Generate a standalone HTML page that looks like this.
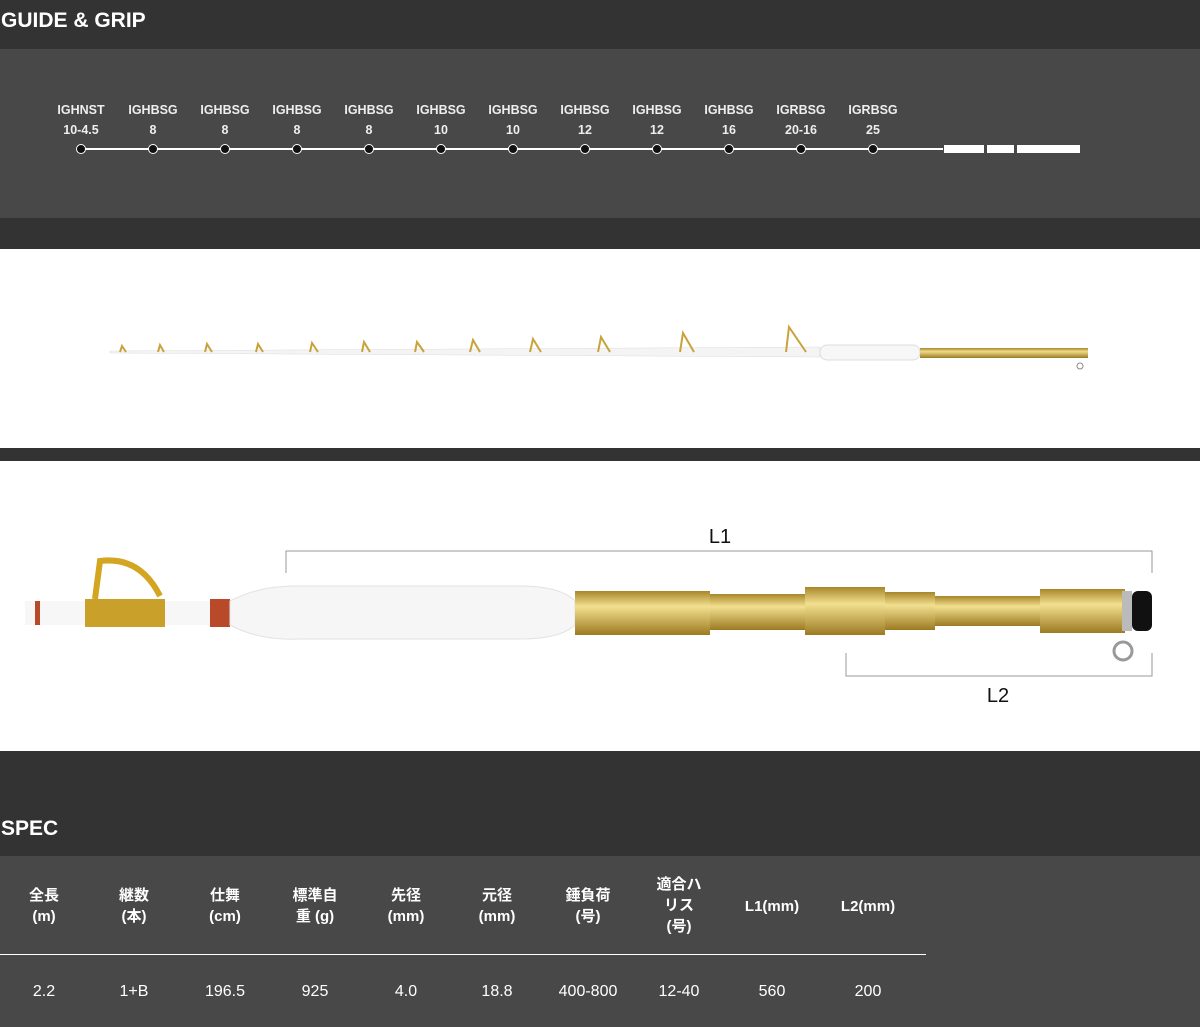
<!DOCTYPE html>
<html><head><meta charset="utf-8"><style>
body{margin:0;width:1200px;height:1027px;background:#333;font-family:"Liberation Sans","Noto Sans CJK JP",sans-serif;color:#fff;position:relative;overflow:hidden}
.a{position:absolute}
h2{position:absolute;margin:0;font-size:21px;font-weight:bold;left:1px}
.g{position:absolute;top:100px;width:80px;margin-left:-40px;text-align:center;font-size:12.5px;line-height:20px;font-weight:bold;color:#eee}
.dot{position:absolute;top:144px;width:8px;height:8px;margin-left:-5px;border:1px solid #fff;border-radius:50%;background:#111}
.th,.td{position:absolute;width:100px;margin-left:-50px;text-align:center;font-size:15px;font-weight:bold}
.th{line-height:21px}
.td{top:983px;font-weight:normal;font-size:16px}
</style></head><body>
<h2 style="top:9px">GUIDE &amp; GRIP</h2>
<div class="a" style="top:49px;left:0;width:1200px;height:169px;background:#484848"></div>
<div class="a" style="top:148px;left:81px;width:862px;height:2px;background:#fff"></div>
<div class="a" style="top:145px;left:944px;width:40px;height:8px;background:#fff"></div>
<div class="a" style="top:145px;left:987px;width:27px;height:8px;background:#fff"></div>
<div class="a" style="top:145px;left:1017px;width:63px;height:8px;background:#fff"></div>
<div class="g" style="left:81px">IGHNST<br>10-4.5</div><div class="dot" style="left:81px"></div>
<div class="g" style="left:153px">IGHBSG<br>8</div><div class="dot" style="left:153px"></div>
<div class="g" style="left:225px">IGHBSG<br>8</div><div class="dot" style="left:225px"></div>
<div class="g" style="left:297px">IGHBSG<br>8</div><div class="dot" style="left:297px"></div>
<div class="g" style="left:369px">IGHBSG<br>8</div><div class="dot" style="left:369px"></div>
<div class="g" style="left:441px">IGHBSG<br>10</div><div class="dot" style="left:441px"></div>
<div class="g" style="left:513px">IGHBSG<br>10</div><div class="dot" style="left:513px"></div>
<div class="g" style="left:585px">IGHBSG<br>12</div><div class="dot" style="left:585px"></div>
<div class="g" style="left:657px">IGHBSG<br>12</div><div class="dot" style="left:657px"></div>
<div class="g" style="left:729px">IGHBSG<br>16</div><div class="dot" style="left:729px"></div>
<div class="g" style="left:801px">IGRBSG<br>20-16</div><div class="dot" style="left:801px"></div>
<div class="g" style="left:873px">IGRBSG<br>25</div><div class="dot" style="left:873px"></div>

<svg class="a" style="top:249px;left:0" width="1200" height="199">
<defs><linearGradient id="gd" x1="0" y1="0" x2="0" y2="1"><stop offset="0" stop-color="#a8862a"/><stop offset=".35" stop-color="#f0dc8a"/><stop offset="1" stop-color="#9c7a22"/></linearGradient></defs>
<rect width="1200" height="199" fill="#fff"/>
<path d="M110 102 L820 98 L820 108 L110 104Z" fill="#f4f4f4" stroke="#ddd" stroke-width="0.5"/>
<g fill="none" stroke="#c9a23a" stroke-width="2"><path d="M120 103 L122 97 L126 103"/><path d="M158 103 L160 96 L164 103"/><path d="M205 103 L207 95 L212 103"/><path d="M256 103 L258 95 L263 103"/><path d="M310 103 L312 94 L318 103"/><path d="M362 103 L364 93 L370 103"/><path d="M415 103 L417 93 L424 103"/><path d="M470 103 L473 91 L480 103"/><path d="M530 103 L533 90 L541 103"/><path d="M598 103 L601 88 L610 103"/><path d="M680 103 L683 84 L694 103"/><path d="M786 103 L789 78 L806 103"/></g>
<rect x="820" y="96" width="100" height="15" rx="7" fill="#f7f7f7" stroke="#ddd"/>
<rect x="920" y="99" width="168" height="10" fill="url(#gd)"/>
<circle cx="1080" cy="117" r="3" fill="none" stroke="#888"/>
</svg>

<svg class="a" style="top:461px;left:0" width="1200" height="290">
<defs><linearGradient id="g2" x1="0" y1="0" x2="0" y2="1"><stop offset="0" stop-color="#a8862a"/><stop offset=".35" stop-color="#f2e090"/><stop offset="1" stop-color="#9c7a22"/></linearGradient></defs>
<rect width="1200" height="290" fill="#fff"/>
<rect x="25" y="140" width="220" height="24" fill="#f7f7f7"/>
<rect x="35" y="140" width="5" height="24" fill="#b84a2a"/>
<rect x="210" y="138" width="20" height="28" fill="#b84a2a"/>
<rect x="85" y="138" width="80" height="28" fill="#c9a02a"/>
<path d="M95 138 L100 100 Q140 95 160 135" fill="none" stroke="#d4a520" stroke-width="6"/>
<path d="M230 140 Q260 124 300 125 L520 125 Q560 125 575 140 L575 164 Q560 178 520 178 L300 178 Q260 180 230 164Z" fill="#f6f6f6" stroke="#e2e2e2"/>
<rect x="575" y="130" width="135" height="44" fill="url(#g2)"/>
<rect x="710" y="133" width="100" height="36" fill="url(#g2)"/>
<rect x="805" y="126" width="80" height="48" fill="url(#g2)"/>
<rect x="885" y="131" width="50" height="38" fill="url(#g2)"/>
<rect x="935" y="135" width="110" height="30" fill="url(#g2)"/>
<rect x="1040" y="128" width="85" height="44" fill="url(#g2)"/>
<rect x="1122" y="130" width="10" height="40" fill="#bbb"/>
<rect x="1132" y="130" width="20" height="40" rx="6" fill="#111"/>
<circle cx="1123" cy="190" r="9" fill="none" stroke="#999" stroke-width="3"/>
<path d="M286 112 V90 H1152 V112" fill="none" stroke="#999"/>
<path d="M846 192 V215 H1152 V192" fill="none" stroke="#999"/>
<text x="720" y="82" font-size="20" fill="#111" text-anchor="middle" font-family="Liberation Sans">L1</text>
<text x="998" y="241" font-size="20" fill="#111" text-anchor="middle" font-family="Liberation Sans">L2</text>
</svg>

<h2 style="top:817px">SPEC</h2>
<div class="a" style="top:856px;left:0;width:1200px;height:171px;background:#484848"></div>
<div class="a" style="top:954px;left:0;width:926px;height:1px;background:#fff"></div>
<div class="th" style="left:44px;top:885px">全長<br>(m)</div>
<div class="th" style="left:134px;top:885px">継数<br>(本)</div>
<div class="th" style="left:225px;top:885px">仕舞<br>(cm)</div>
<div class="th" style="left:315px;top:885px">標準自<br>重 (g)</div>
<div class="th" style="left:406px;top:885px">先径<br>(mm)</div>
<div class="th" style="left:497px;top:885px">元径<br>(mm)</div>
<div class="th" style="left:588px;top:885px">錘負荷<br>(号)</div>
<div class="th" style="left:679px;top:874px">適合ハ<br>リス<br>(号)</div>
<div class="th" style="left:772px;top:896px">L1(mm)</div>
<div class="th" style="left:868px;top:896px">L2(mm)</div>
<div class="td" style="left:44px">2.2</div>
<div class="td" style="left:134px">1+B</div>
<div class="td" style="left:225px">196.5</div>
<div class="td" style="left:315px">925</div>
<div class="td" style="left:406px">4.0</div>
<div class="td" style="left:497px">18.8</div>
<div class="td" style="left:588px">400-800</div>
<div class="td" style="left:679px">12-40</div>
<div class="td" style="left:772px">560</div>
<div class="td" style="left:868px">200</div>
</body></html>
